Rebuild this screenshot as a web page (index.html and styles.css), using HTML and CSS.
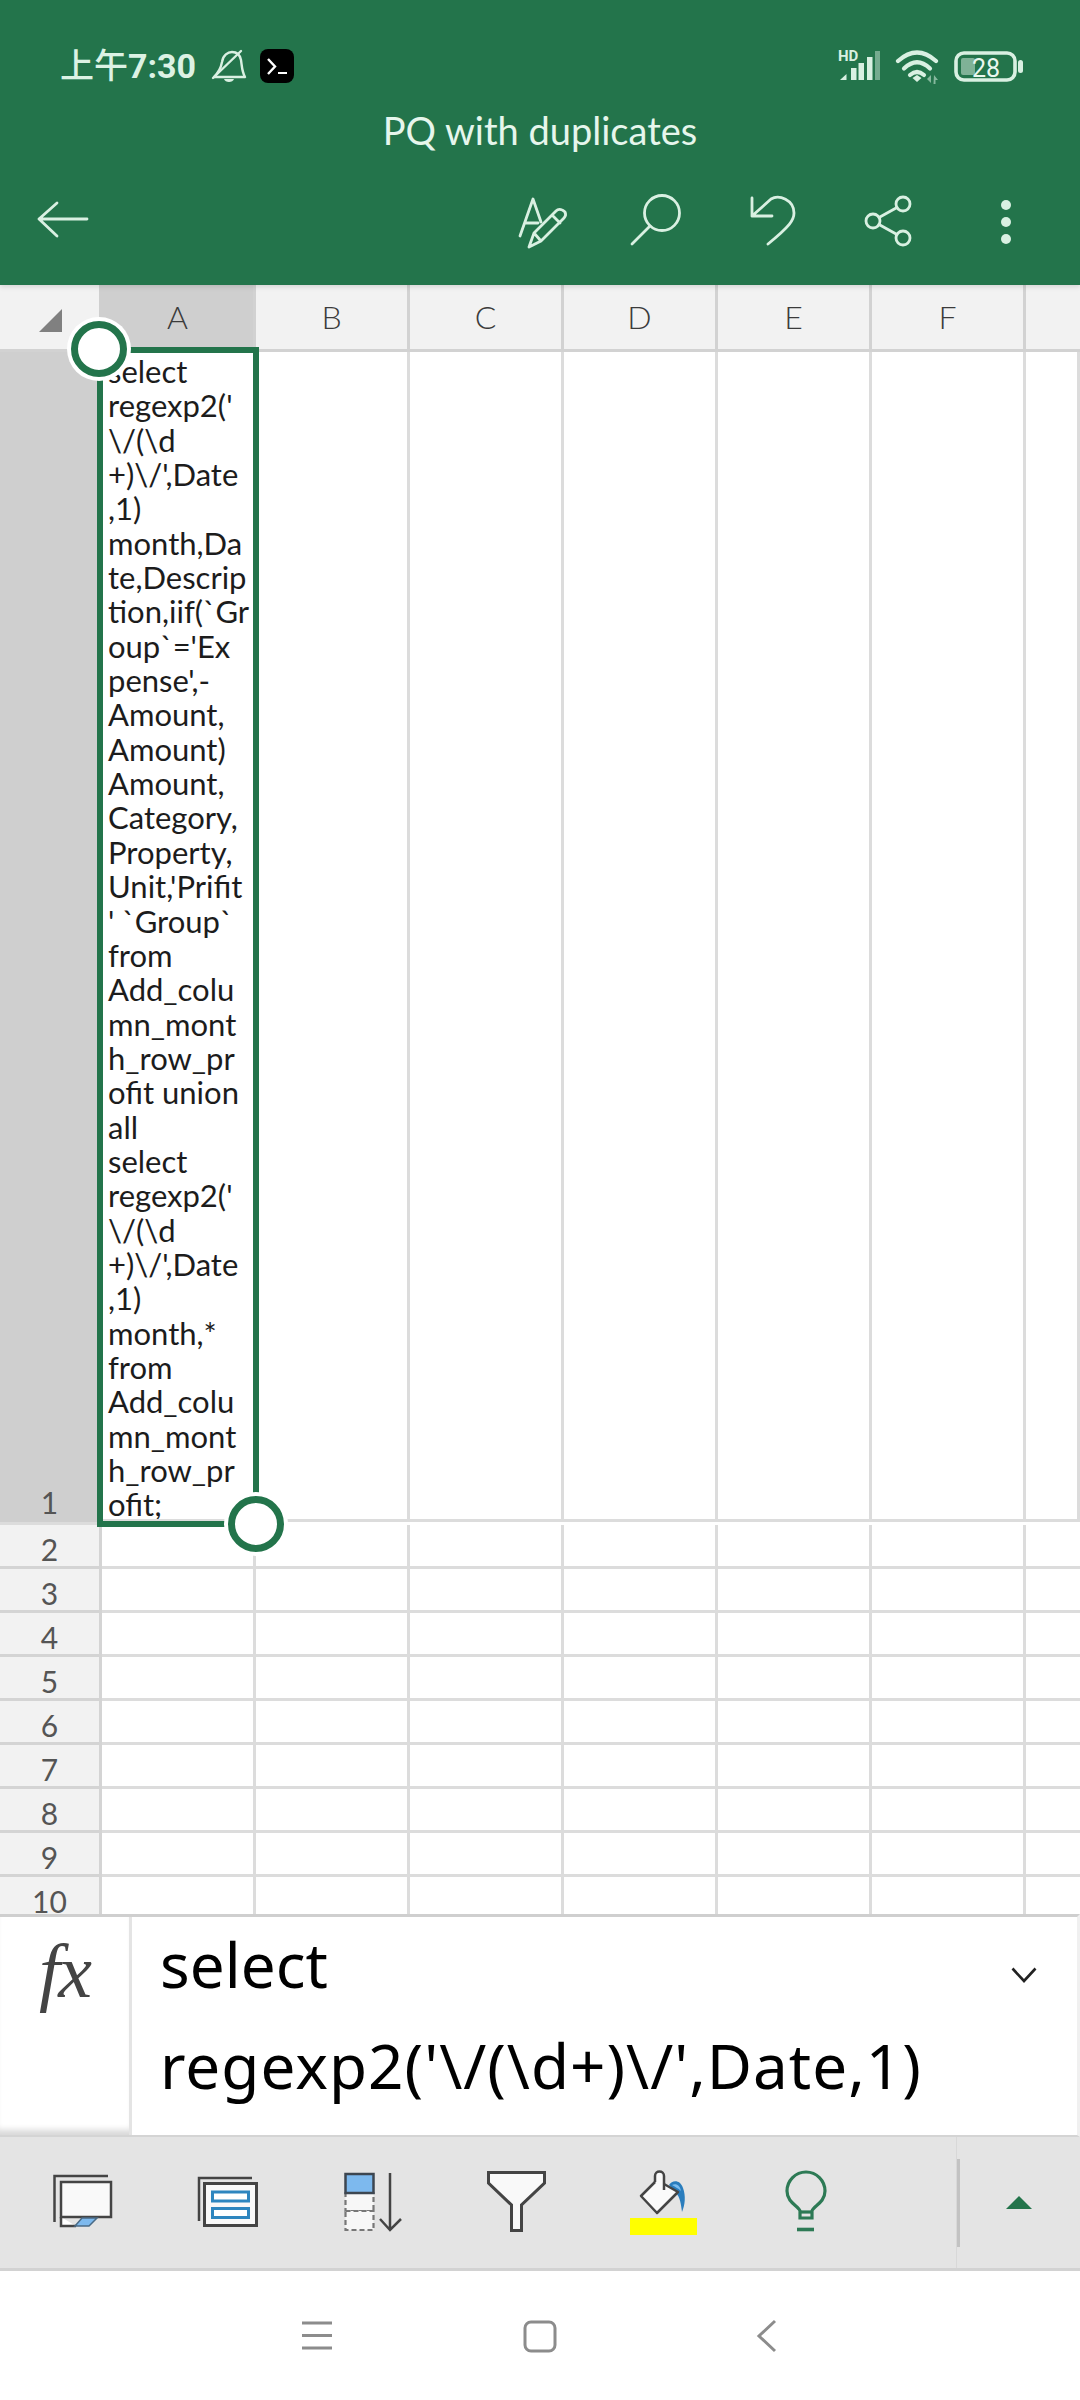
FILE: index.html
```html
<!DOCTYPE html>
<html lang="en">
<head>
<meta charset="utf-8">
<title>PQ with duplicates</title>
<link rel="stylesheet" href="styles.css">
</head>
<body>
<div class="app">
  <header class="topbar">
    <div class="status">
      <span class="time"><span class="time-cjk">上午</span>7:30</span>
      <svg class="st-bell" viewBox="210 48 38 36" width="38" height="36"><g fill="none" stroke="#d9f0e2" stroke-width="2.4" stroke-linejoin="round" stroke-linecap="round"><path d="M214 77C219 72 221 68 222 62C223 55 228 52 232 52C237 52 240 55 241 60C242 67 242 72 245 77Z"/><path d="M213 78L241 51"/></g><path d="M224 79H234C233 83 225 83 224 79Z" fill="#d9f0e2"/></svg>
      <svg class="st-term" viewBox="260 49 34 34" width="34" height="34"><rect x="260" y="49" width="34" height="34" rx="8" fill="#000"/><path d="M268 59L275 66.5L268 74" fill="none" stroke="#fff" stroke-width="2.4"/><path d="M278 73H287" stroke="#fff" stroke-width="2"/></svg>
      <div class="status-right">
        <svg viewBox="836 48 190 36" width="190" height="36">
          <text x="838" y="61" class="hd">HD</text>
          <g fill="#d9f0e2"><path d="M840 80L846.500 74V80Z"/><rect x="851" y="68" width="5.500" height="12"/><rect x="858.500" y="63" width="5.500" height="17"/><rect x="867" y="57" width="5.500" height="23"/><rect x="875" y="51" width="5" height="29" opacity=".45"/></g>
          <g fill="none" stroke="#d9f0e2" stroke-width="4.200" stroke-linecap="round"><path d="M898 61Q917 44 936 61"/><path d="M904 68.500Q917 56 930 68.500"/><path d="M910 75Q917 69 924 75"/></g>
          <path d="M912.500 78L917 75L921.500 78L917 82Z" fill="#d9f0e2"/>
          <path d="M931 75L927 79L931 83ZM934 75L938 80H935.500V84H933.500Z" fill="#d9f0e2" opacity=".55"/>
          <rect x="956" y="53" width="59" height="27" rx="8" fill="none" stroke="#d9f0e2" stroke-width="3.600"/>
          <rect x="961" y="58" width="14" height="17" rx="2" fill="#7fb297"/>
          <text x="972" y="76.500" class="batt">28</text>
          <rect x="1018" y="60" width="5" height="13" rx="2.500" fill="#d9f0e2"/>
        </svg>
      </div>
    </div>
    <h1 class="title">PQ with duplicates</h1>
    <div class="actions">
      <svg viewBox="27 190 70 60" width="70" height="60"><path d="M87 219H39M57 203L39 219L57 236" class="ln"/></svg>
      <div class="action-group">
        <svg viewBox="510 190 70 60" width="70" height="60"><path d="M520 236L533 199L541 222M525 223H538" class="ln"/><path d="M529 247L534 233L556 211C559 208 563 210 565 212C566 214 566 216 564 218L541 241ZM534 233L541 241M552 215L560 223" class="ln"/></svg>
        <svg viewBox="625 190 70 60" width="70" height="60"><circle cx="662" cy="213" r="17.500" class="ln"/><path d="M650 226L632 244" class="ln"/></svg>
        <svg viewBox="740 190 70 60" width="70" height="60"><path d="M752 198V216H772M752 216L771 199C779 194 794 200 794 213C794 220 790 226 768 244" class="ln"/></svg>
        <svg viewBox="855 190 70 60" width="70" height="60"><circle cx="873" cy="221" r="7" class="ln"/><circle cx="903" cy="204" r="7" class="ln"/><circle cx="903" cy="238" r="7" class="ln"/><path d="M879 217.500L897 207.500M879 224.500L897 234.500" class="ln"/></svg>
        <svg viewBox="970 190 70 60" width="70" height="60"><g fill="#d9f0e2"><circle cx="1006" cy="205" r="5"/><circle cx="1006" cy="222" r="5"/><circle cx="1006" cy="239" r="5"/></g></svg>
      </div>
    </div>
  </header>

  <main class="sheet">
    <div class="row row-head">
      <div class="corner"><svg viewBox="0 0 23 23" width="23" height="23"><path d="M23 0V23H0Z" fill="#808080"/></svg></div>
      <div class="col col-sel">A</div><div class="col">B</div><div class="col">C</div><div class="col">D</div><div class="col">E</div><div class="col">F</div><div class="col col-last"></div>
    </div>
    <div class="row row-tall">
      <div class="rh rh-sel">1</div>
      <div class="c c-text">select<br>regexp2('<br>\/(\d<br>+)\/',Date<br>,1)<br>month,Da<br>te,Descrip<br>tion,iif(`Gr<br>oup`='Ex<br>pense',-<br>Amount,<br>Amount)<br>Amount,<br>Category,<br>Property,<br>Unit,'Prifit<br>' `Group`<br>from<br>Add_colu<br>mn_mont<br>h_row_pr<br>ofit union<br>all<br>select<br>regexp2('<br>\/(\d<br>+)\/',Date<br>,1)<br>month,*<br>from<br>Add_colu<br>mn_mont<br>h_row_pr<br>ofit;</div>
      <div class="c"></div><div class="c"></div><div class="c"></div><div class="c"></div><div class="c"></div><div class="c"></div><div class="c c-last"></div>
    </div>
    <div class="row"><div class="rh">2</div><div class="c"></div><div class="c"></div><div class="c"></div><div class="c"></div><div class="c"></div><div class="c"></div><div class="c c-last"></div></div>
    <div class="row"><div class="rh">3</div><div class="c"></div><div class="c"></div><div class="c"></div><div class="c"></div><div class="c"></div><div class="c"></div><div class="c c-last"></div></div>
    <div class="row"><div class="rh">4</div><div class="c"></div><div class="c"></div><div class="c"></div><div class="c"></div><div class="c"></div><div class="c"></div><div class="c c-last"></div></div>
    <div class="row"><div class="rh">5</div><div class="c"></div><div class="c"></div><div class="c"></div><div class="c"></div><div class="c"></div><div class="c"></div><div class="c c-last"></div></div>
    <div class="row"><div class="rh">6</div><div class="c"></div><div class="c"></div><div class="c"></div><div class="c"></div><div class="c"></div><div class="c"></div><div class="c c-last"></div></div>
    <div class="row"><div class="rh">7</div><div class="c"></div><div class="c"></div><div class="c"></div><div class="c"></div><div class="c"></div><div class="c"></div><div class="c c-last"></div></div>
    <div class="row"><div class="rh">8</div><div class="c"></div><div class="c"></div><div class="c"></div><div class="c"></div><div class="c"></div><div class="c"></div><div class="c c-last"></div></div>
    <div class="row"><div class="rh">9</div><div class="c"></div><div class="c"></div><div class="c"></div><div class="c"></div><div class="c"></div><div class="c"></div><div class="c c-last"></div></div>
    <div class="row"><div class="rh">10</div><div class="c"></div><div class="c"></div><div class="c"></div><div class="c"></div><div class="c"></div><div class="c"></div><div class="c c-last"></div></div>
    <div class="selection"></div>
    <div class="handle handle-tl"></div>
    <div class="handle handle-br"></div>
  </main>

  <section class="formula">
    <div class="fx"><span class="fx-label">fx</span></div>
    <div class="f-text">select<br><span class="f-line2">regexp2('\/(\d+)\/',Date,1)</span></div>
    <svg class="f-chev" viewBox="0 0 26 16" width="26" height="16"><path d="M1.500 1.500L13 14L24.500 1.500" fill="none" stroke="#222" stroke-width="2.600"/></svg>
  </section>

  <section class="tools">
    <svg viewBox="11 2160 144 90" width="144" height="90"><path d="M54.500 2224V2178H108" class="t-ln"/><path d="M61 2219V2228H76" fill="#fff" stroke="#444" stroke-width="2.500"/><rect x="61" y="2184" width="50" height="35" fill="#f9f9f9" stroke="#444" stroke-width="2.500"/><path d="M82 2220H97L89 2228H75Z" fill="#7db9ee" stroke="#4a6a85" stroke-width="1.500"/></svg>
    <svg viewBox="155 2160 144 90" width="144" height="90"><path d="M199 2223V2180H252" class="t-ln"/><rect x="204.500" y="2185.500" width="52" height="42" fill="#f9f9f9" stroke="#444" stroke-width="3"/><rect x="212.500" y="2194" width="36" height="9" fill="#fff" stroke="#2e86bf" stroke-width="3"/><rect x="212.500" y="2210.500" width="36" height="9" fill="#fff" stroke="#2e86bf" stroke-width="3"/></svg>
    <svg viewBox="299 2160 144 90" width="144" height="90"><rect x="345.500" y="2195" width="28" height="18" fill="#f7f7f7" stroke="#777" stroke-width="2.200" stroke-dasharray="5 3"/><rect x="345.500" y="2213" width="28" height="19" fill="#f7f7f7" stroke="#777" stroke-width="2.200" stroke-dasharray="5 3"/><rect x="345.500" y="2176" width="28" height="19" fill="#7db9ee" stroke="#3d4650" stroke-width="2.500"/><path d="M390 2175V2232M380 2221L390 2232L401 2221" class="t-ln"/></svg>
    <svg viewBox="443 2160 144 90" width="144" height="90"><path d="M488.500 2174.500H544.500V2185L521.500 2207V2232.500H511.500V2207L488.500 2185Z" fill="#f9f9f9" stroke="#444" stroke-width="3"/></svg>
    <svg viewBox="587 2160 144 90" width="144" height="90"><rect x="630" y="2220" width="67" height="17" fill="#ffff00"/><path d="M669 2187C672 2182 680 2181 683 2190C686 2198 685 2207 682 2214C681 2206 680 2199 676 2195Z" fill="#2a7dbd"/><path d="M672 2187C676 2185 680 2187 681 2193C678 2190 675 2189 672 2187Z" fill="#7cbcee"/><path d="M641 2198L657 2182L678 2194L657 2215Z" fill="#fafafa" stroke="#444" stroke-width="2.500" stroke-linejoin="round"/><path d="M655 2184V2178C655 2172 664 2172 664 2178V2192" fill="#fafafa" stroke="#444" stroke-width="2.500"/></svg>
    <svg viewBox="731 2160 144 90" width="144" height="90"><g fill="none" stroke="#2d7a55" stroke-width="3.200"><path d="M800 2220V2213C799 2208 787 2205 787 2193A19 19 0 1 1 825 2193C825 2205 813 2208 812 2213V2220Z"/><path d="M800 2214H812"/><path d="M797 2231.500H814" stroke-width="3.600"/></g></svg>
    <div class="more"><svg viewBox="0 0 26 13" width="26" height="13"><path d="M13 0L26 13H0Z" fill="#23744b"/></svg></div>
  </section>

  <nav class="navbar">
    <svg viewBox="287 2305 60 60" width="60" height="60"><path d="M302 2322H332M302 2334.500H332M302 2347H332" class="n-ln"/></svg>
    <svg viewBox="510 2305 60 60" width="60" height="60"><rect x="525" y="2321" width="30" height="29" rx="6" class="n-ln"/></svg>
    <svg viewBox="733 2305 60 60" width="60" height="60"><path d="M775 2320L759 2335L775 2350" class="n-ln"/></svg>
  </nav>
</div>
</body>
</html>
```
FILE: styles.css
```css
* { box-sizing: border-box; }
html, body { margin: 0; padding: 0; background: #fff; }
body { font-family: "Lato", "Noto Sans", sans-serif; }
.app { width: 1080px; height: 2400px; display: flex; flex-direction: column; overflow: hidden; }
svg { display: block; flex: none; }

.topbar { height: 285px; flex: none; background: #23744b; position: relative; z-index: 2; box-shadow: 0 2px 5px rgba(0,0,0,.12); }
.status { display: flex; align-items: center; height: 84px; padding: 48px 0 0 60px; }
.time { font-family: "Roboto", "Noto Sans CJK SC", sans-serif; font-weight: 700; font-size: 34px; color: #dcf2e4; line-height: 36px; width: 150px; white-space: nowrap; }
.time-cjk { font-weight: 500; }
.st-term { margin-left: 12px; }
.status-right { margin-left: auto; padding-right: 54px; }
.hd { font-family: "Roboto", sans-serif; font-weight: 700; font-size: 15px; fill: #d9f0e2; }
.batt { font-family: "Roboto", sans-serif; font-size: 25px; fill: #eaf7ef; }
.title { margin: 0; padding-top: 21px; height: 106px; text-align: center; font-weight: 400; font-size: 38px; line-height: 50px; color: #e6f6ec; }
.actions { display: flex; height: 60px; padding-left: 27px; }
.action-group { display: flex; gap: 45px; margin-left: auto; padding-right: 40px; }
.ln { fill: none; stroke: #d9f0e2; stroke-width: 2.800; stroke-linecap: round; stroke-linejoin: round; }

.sheet { position: relative; height: 1629px; flex: none; overflow: hidden; }
.row { display: grid; grid-template-columns: 102px repeat(6, 154px) 54px; grid-template-rows: minmax(0, 1fr); height: 44px; }
.row-head { height: 67px; }
.row-tall { height: 1173px; }
.corner { background: #f2f2f2; border-bottom: 3px solid #d2d2d2; padding: 24px 0 0 39px; }
.col { background: #f2f2f2; border-right: 3px solid #d2d2d2; border-bottom: 3px solid #d2d2d2; display: flex; align-items: center; justify-content: center; padding: 0 0 2px 0; font-weight: 300; font-size: 32px; color: #3b3b3b; }
.col-sel { background: #cfcfcf; margin-left: -3px; padding-left: 3px; }
.col-last { border-right: 0; }
.rh { background: #f2f2f2; border-right: 3px solid #d4d4d4; border-bottom: 3px solid #d4d4d4; text-align: center; font-size: 30px; line-height: 44px; padding-top: 2px; color: #555; }
.rh-sel { background: #cfcfcf; border-color: #cfcfcf; display: flex; align-items: flex-end; justify-content: center; padding: 0; line-height: 34px; }
.c { border-right: 3px solid #dcdcdc; border-bottom: 3px solid #dcdcdc; }
.c-last { border-right: 0; }
.c-text { padding: 2px 0 0 6px; font-size: 31px; line-height: 34.350px; color: #1c1c1c; white-space: nowrap; overflow: hidden; }
.selection { position: absolute; left: 97px; top: 62px; width: 162px; height: 1180px; border: 6px solid #23744b; }
.handle { position: absolute; width: 56px; height: 56px; border-radius: 50%; background: #fff; border: 7px solid #23744b; box-shadow: 0 0 0 4px #fff; }
.handle-tl { left: 71px; top: 36px; }
.handle-br { left: 228px; top: 1211px; }

.formula { height: 223px; flex: none; display: flex; border-top: 3px solid #cfcfcf; border-bottom: 2px solid #d4d4d4; border-right: 3px solid #f0f0f0; background: #fff; }
.fx { width: 132px; border-right: 3px solid #e4e4e4; box-shadow: inset 0 -9px 6px -4px #d8d8d8; text-align: center; }
.fx-label { font-family: "Liberation Serif", serif; font-style: italic; font-size: 76px; line-height: 108px; letter-spacing: -2px; color: #444; }
.f-text { flex: 1; margin-top: -3px; padding-left: 28px; font-family: "Noto Sans", sans-serif; font-size: 62px; line-height: 101px; color: #000; white-space: nowrap; }
.f-line2 { letter-spacing: 1px; }
.f-chev { margin: 50px 40px 0 0; }

.tools { height: 134px; flex: none; background: #e4e4e4; display: flex; align-items: center; padding-left: 11px; border-bottom: 3px solid #d2d2d2; }
.more { margin-left: auto; width: 124px; height: 100%; border-left: 1px solid #d8d8d8; background: linear-gradient(#c2c2c2, #c2c2c2) left center / 3px 88px no-repeat; display: flex; align-items: center; justify-content: center; }
.t-ln { fill: none; stroke: #444; stroke-width: 2.500; }

.navbar { flex: 1; display: flex; gap: 163px; align-items: center; padding-left: 287px; background: #fff; }
.n-ln { fill: none; stroke: #8c8c8c; stroke-width: 3; }
```
